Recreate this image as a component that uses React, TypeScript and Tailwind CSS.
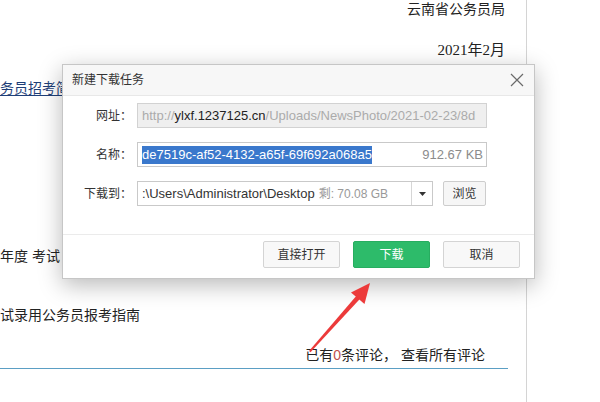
import React from "react";

const sans = "font-['Liberation_Sans','Noto_Sans_CJK_SC',sans-serif]";

function CloseIcon() {
  return (
    <svg width="14" height="14" viewBox="0 0 14 14" className="text-[#6a6a6a]">
      <path d="M1 1 L13 13 M13 1 L1 13" stroke="currentColor" strokeWidth="1.2" fill="none" />
    </svg>
  );
}

function Arrow() {
  // red annotation arrow pointing at the download button
  return (
    <svg
      className="pointer-events-none absolute left-0 top-0"
      width="600"
      height="402"
      viewBox="0 0 600 402"
    >
      <path d="M309 351 L357.5 294.5 L361 297.8 L310.5 352.2 Z" fill="#ec3a3a" />
      <path d="M370 283 L351 292.5 L364.5 304 Z" fill="#ec3a3a" />
    </svg>
  );
}

function DownloadDialog() {
  return (
    <div
      className={`absolute left-[62px] top-[64px] w-[473px] border border-[#c6c6c6] bg-white shadow-[0_6px_22px_rgba(0,0,0,0.28)] ${sans}`}
    >
      <div className="flex h-[31px] items-center justify-between border-b border-[#e8e8e8] bg-[#f7f7f7] pl-[9px] pr-[10px]">
        <span className="text-[12px] text-[#333]">新建下载任务</span>
        <CloseIcon />
      </div>

      <div className="flex flex-col gap-[14px] pb-[28px] pt-[7px]">
        <div className="flex h-[25px] items-center">
          <span className="w-[69px] text-right text-[12px] text-[#333]">网址：</span>
          <div className="ml-[5px] flex h-[25px] w-[350px] items-center overflow-hidden whitespace-nowrap border border-[#d2d2d2] bg-[#efefef] px-[4px] text-[13px]">
            <span className="text-[#ababab]">http://</span>
            <span className="text-[#222]">ylxf.1237125.cn</span>
            <span className="text-[#ababab]">/Uploads/NewsPhoto/2021-02-23/8d</span>
          </div>
        </div>

        <div className="flex h-[25px] items-center">
          <span className="w-[69px] text-right text-[12px] text-[#333]">名称：</span>
          <div className="ml-[5px] flex h-[25px] w-[350px] items-center overflow-hidden whitespace-nowrap border border-[#c9c9c9] bg-white pl-[4px] pr-[3px] text-[13px]">
            <span className="bg-[#3a78cc] leading-[18px] text-white">de7519c-af52-4132-a65f-69f692a068a5</span>
            <span className="ml-auto text-[#8c8c8c]">912.67 KB</span>
          </div>
        </div>

        <div className="flex h-[25px] items-center">
          <span className="w-[69px] text-right text-[12px] text-[#333]">下载到：</span>
          <div className="ml-[5px] flex h-[25px] w-[296px] items-center overflow-hidden whitespace-nowrap border border-[#c9c9c9] bg-white text-[13px]">
            <div className="flex flex-1 items-center overflow-hidden pl-[4px]">
              <span className="text-[#333]">:\Users\Administrator\Desktop</span>
              <span className="ml-[4px] text-[12px] text-[#999]">剩: 70.08 GB</span>
            </div>
            <div className="flex h-full w-[21px] shrink-0 items-center justify-center border-l border-[#d6d6d6]">
              <svg width="7" height="4" viewBox="0 0 7 4">
                <path d="M0 0 L7 0 L3.5 4 Z" fill="#333" />
              </svg>
            </div>
          </div>
          <button className="ml-[10px] h-[25px] w-[43px] rounded-[2px] border border-[#cdcdcd] bg-[#f6f6f6] text-[12px] text-[#333]">
            浏览
          </button>
        </div>
      </div>

      <div className="flex justify-end gap-[13px] border-t border-[#ebebeb] pb-[10px] pr-[14px] pt-[6px]">
        <button className="h-[27px] w-[77px] rounded-[2px] border border-[#d4d4d4] bg-[#f8f8f8] text-[12px] text-[#333]">
          直接打开
        </button>
        <button className="h-[27px] w-[77px] rounded-[2px] border border-[#27ad60] bg-[#2dbb6a] text-[12px] text-white">
          下载
        </button>
        <button className="h-[27px] w-[77px] rounded-[2px] border border-[#d4d4d4] bg-[#f8f8f8] text-[12px] text-[#333]">
          取消
        </button>
      </div>
    </div>
  );
}

export default function App() {
  return (
    <div className="relative h-[402px] w-[600px] overflow-hidden bg-white">
      <div
        className={`flex h-full w-[527px] flex-col border-r border-[#d4d4d4] text-[14px] text-[#222] ${sans}`}
      >
        <div className="h-[18px] pr-[21px] text-right leading-[18px]">云南省公务员局</div>
        <div className="mt-[23px] h-[18px] pr-[21px] text-right leading-[18px] font-['Liberation_Serif','Noto_Sans_CJK_SC',serif] text-[15px]">
          2021年2月
        </div>
        <div className="mt-[20px] h-[18px] whitespace-nowrap leading-[18px]">
          <span className="text-[#1f3f78] underline underline-offset-2">务员招考简章</span>
        </div>
        <div className="mt-[150px] h-[18px] whitespace-nowrap leading-[18px]">年度 考试</div>
        <div className="mt-[41px] h-[18px] whitespace-nowrap leading-[18px]">试录用公务员报考指南</div>
        <div className="mt-[22px] flex h-[18px] justify-end whitespace-nowrap pr-[41px] leading-[18px]">
          <span>
            已有<span className="text-[#c0504d]">0</span>条评论，&nbsp;查看所有评论
          </span>
        </div>
        <div className="mt-[4px] h-px w-[508px] bg-[#5b9fc4]" />
      </div>

      <DownloadDialog />
      <Arrow />
    </div>
  );
}
